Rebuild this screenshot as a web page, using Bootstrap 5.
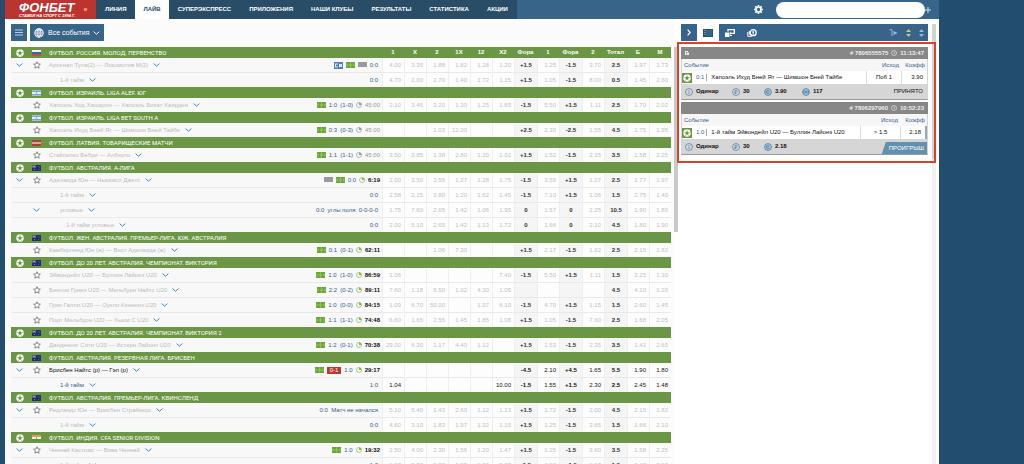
<!DOCTYPE html>
<html lang="ru">
<head>
<meta charset="utf-8">
<meta name="viewport" content="width=device-width, initial-scale=1">
<title>Фонбет — Лайв</title>
<link href="https://cdn.jsdelivr.net/npm/bootstrap@5.3.0/dist/css/bootstrap.min.css" rel="stylesheet">
<style>
  body { font-family: "Liberation Sans", Arial, sans-serif; font-size: 6px; line-height: 14px; color: #111; background: #224d6e; padding: 0 85px 0 5px; }
  a { text-decoration: none; }
  button { background: none; border: 0; padding: 0; color: inherit; line-height: 1; }
  svg { display: block; flex: none; }
  .shell { background: #fff; }

  /* top bar */
  .topbar { height: 19px; background: #386489; color: #fff; }
  .brand { width: 91px; background: #bb3430; padding-left: 14px; color: #fff; }
  .brand-name { font-size: 13px; line-height: 13px; font-weight: 700; font-style: italic; }
  .brand-tag { font-size: 4px; line-height: 4px; font-style: italic; font-weight: 700; }
  .mainmenu { background: #294d66; }
  .mainmenu a { color: #fff; font-size: 6px; font-weight: 700; line-height: 19px; padding: 0 9px; }
  .mainmenu a.active { background: #fff; color: #294d66; padding: 0 8px; }
  .account { width: 149px; height: 16px; border-radius: 8px; background: #fff; margin-left: 13px; }
  .gear { color: #fff; }

  /* line */
  .lines { background: #fbfbfb; padding: 5px 3px 0 6px; }
  .toolrow { gap: 3px; margin-bottom: 6px; }
  .tool { height: 17px; background: #386489; color: #fff; border-radius: 0; }
  .tool-menu { width: 16px; }
  .tool-filter { font-size: 7px; padding: 0 4px; gap: 4px; }
  .scroll-track { width: 4px; }
  .scroll-thumb { width: 4px; height: 185px; background: #c8c8c8; }

  .odds { table-layout: fixed; width: 100%; border-collapse: separate; border-spacing: 0; }
  .odds th, .odds td { padding: 0; white-space: nowrap; overflow: hidden; }
  .c-odd { width: 22px; }
  .c-key { width: 23px; }
  .league th { height: 11px; line-height: 11px; background: #6b9645; color: #fff; font-weight: 700; text-align: center; }
  .league .league-cell { font-family: Roboto, "Liberation Sans", sans-serif; font-weight: 400; text-align: left; }
  .slot { flex: none; width: 17px; display: flex; justify-content: center; }
  .game td { height: 14px; line-height: 14px; background: #fdfdfd; color: #c0c0c0; border-left: 1px solid #efefef; text-align: right; padding-right: 3px; }
  .game td:first-child { background: #f8f8f8; border-left: 0; padding: 0; }
  .game td.key { background: #f5f5f5; color: #333; text-align: center; padding: 0; font-weight: 700; }
  .game + .game td { border-top: 1px solid #e9e9e9; }
  .game.open td { color: #111; }
  .game .title { color: #bcbcbc; }
  .game.open .title { color: #111; }
  .game.open .title.sub { color: #35608a; }
  .title { margin-left: 4px; gap: 5px; }
  .title.sub { margin-left: 15px; }
  .title.deep { margin-left: 21px; }
  .status { color: #35608a; gap: 3px; padding-right: 4px; }
  .status.timed { padding-right: 2px; }
  .clock { color: #84b552; gap: 3px; }
  .clock.pause { color: #999; }
  .clock-text { color: #111; font-weight: 700; }
  .pause .clock-text { color: #999; font-weight: 400; }
  .redcard { background: #b93a35; color: #fff; line-height: 7px; padding: 0 3px; }
  .odds .chev { color: #3f86b8; }
  .star { color: #777; }

  /* coupons */
  .side { width: 261px; padding: 5px 3px 0 3px; }
  .tabs { height: 17px; background: #386489; color: #fff; }
  .tabs button { width: 22px; height: 17px; display: flex; align-items: center; justify-content: center; }
  .tabs button:first-child { width: 16px; }
  .tabs button.active { background: #fff; color: #294d66; }
  .marker { position: absolute; inset: 18px -8px auto -4px; height: 121px; border: 2px solid #d9412c; pointer-events: none; }
  .coupons { padding-top: 6px; gap: 2px; }
  .coupon { border: 1px solid #d4d4d4; border-bottom-color: #999; background: #f6f6f6; }
  .coupon-head { height: 12px; margin: -1px -1px 0; background: #878787; color: #eee; line-height: 12px; padding: 0 4px; gap: 3px; font-weight: 700; }
  .bet { width: 100%; table-layout: fixed; border-collapse: separate; border-spacing: 0; }
  .bet th { height: 12px; padding: 0 2px; line-height: 12px; font-weight: 400; color: #35608a; text-align: right; }
  .bet td { height: 13px; padding: 0; line-height: 13px; background: #fff; text-align: center; border-left: 1px solid #ddd; white-space: nowrap; }
  .bet th:first-child { text-align: left; }
  .bet td:first-child { border-left: 0; }
  .bet td:last-child { text-align: right; padding-right: 4px; }
  .bet td.scrolled { border-right: 2px solid #8fa9bd; }
  .bet-score { color: #35608a; border-right: 1px solid #aaa; line-height: 7px; padding-right: 2px; }
  .coupon-foot { height: 15px; background: #d6d6d6; line-height: 15px; font-weight: 700; }
  .fact { gap: 3px; }
  .fact-a { width: 50px; padding-left: 3px; }
  .fact-b { width: 32px; }
  .fact-c { width: 38px; }
  .lost { align-self: flex-end; background: #6490b0; color: #fff; font-weight: 400; line-height: 12px; padding: 0 3px 0 7px; clip-path: polygon(4px 0, 100% 0, 100% 100%, 0 100%); }
  .side-scroll { width: 4px; background: #f0f0f0; }
  .side-thumb { width: 4px; height: 135px; background: #d3d3d3; }
</style>
<script src="https://cdn.jsdelivr.net/npm/bootstrap@5.3.0/dist/js/bootstrap.bundle.min.js"></script>
</head>
<body class="vh-100 overflow-hidden">

<svg width="0" height="0" class="position-absolute" aria-hidden="true">
  <symbol id="i-chev" viewBox="0 0 7 4"><path d="M.6.6 3.500 3.200 6.400.6" fill="none" stroke="currentColor" stroke-width="1"/></symbol>
  <symbol id="i-star" viewBox="0 0 16 16"><path d="M8 1.500l2 4.400 4.800.5-3.600 3.200 1 4.800L8 12l-4.200 2.400 1-4.800L1.200 6.400 6 5.900z" fill="none" stroke="currentColor" stroke-width="1.700"/></symbol>
  <symbol id="i-ball" viewBox="0 0 16 16"><circle cx="8" cy="8" r="7.500" fill="#fff"/><path d="M8 5l3 2.200-1.200 3.500H6.200L5 7.200zM8 0v3M1 6l2 1M15 6l-2 1M4 14l1-2M12 14l-1-2" fill="#6b9645" stroke="#6b9645" stroke-width="1"/><path d="M8 3v2M3 7l2 .2M13 7l-2 .2M5 12l1.200-1.300M11 12l-1.200-1.300" stroke="#6b9645" stroke-width="1"/></symbol>
  <symbol id="i-pitch" viewBox="0 0 9 6"><path fill="#6aa536" d="M0 0h9v6H0z"/><path d="M4.500 0v6M0 2h1.500v2H0M9 2H7.500v2H9" fill="none" stroke="#a9d27c" stroke-width=".5"/><circle cx="4.500" cy="3" r="1.100" fill="none" stroke="#a9d27c" stroke-width=".5"/></symbol>
  <symbol id="i-tv" viewBox="0 0 9 6"><path fill="#9a9a9a" d="M0 0h9v5H0z"/></symbol>
  <symbol id="i-stream" viewBox="0 0 9 7"><path fill="#4f80b3" d="M0 0h9v7H0z"/><path fill="#dce8f4" d="M1 1.500h3v1H2v2h2v1H1zM5 2h3v3H5z"/></symbol>
  <symbol id="i-clock" viewBox="0 0 12 12"><circle cx="6" cy="6" r="5" fill="none" stroke="currentColor" stroke-width="1.300"/><path d="M6 6V1a5 5 0 0 1 5 5z" fill="currentColor"/></symbol>
  <symbol id="i-time" viewBox="0 0 12 12"><circle cx="6" cy="6" r="5" fill="none" stroke="currentColor" stroke-width="1.200"/><path d="M6 3v3.500h2" fill="none" stroke="currentColor" stroke-width="1.200"/></symbol>
  <symbol id="f-ru" viewBox="0 0 9 6"><path fill="#f3f3f3" d="M0 0h9v2H0z"/><path fill="#3b62ad" d="M0 2h9v2H0z"/><path fill="#c84a4a" d="M0 4h9v2H0z"/></symbol>
  <symbol id="f-il" viewBox="0 0 9 6"><path fill="#e8eef6" d="M0 0h9v6H0z"/><path fill="#5b8dcb" d="M0 .6h9v1.200H0zM0 4.200h9v1.200H0zM4.500 2l1 1.500h-2z"/></symbol>
  <symbol id="f-lv" viewBox="0 0 9 6"><path fill="#a5433c" d="M0 0h9v6H0z"/><path fill="#f3e6e2" d="M0 2.400h9v1.200H0z"/></symbol>
  <symbol id="f-au" viewBox="0 0 9 6"><path fill="#20306f" d="M0 0h9v6H0z"/><path stroke="#d8b9c8" stroke-width=".4" d="M0 0l4 3M4 0L0 3M2 0v3M0 1.500h4"/><path fill="#aab3dc" d="M6.500 1h.6v.6h-.6zM7.500 2.500h.6v.6h-.6zM6.500 4.500h.6v.6h-.6zM2 4.300h.8v.8H2z"/></symbol>
  <symbol id="f-in" viewBox="0 0 9 6"><path fill="#e79a4c" d="M0 0h9v2H0z"/><path fill="#f5f3ec" d="M0 2h9v2H0z"/><path fill="#59924a" d="M0 4h9v2H0z"/><circle cx="4.500" cy="3" r=".7" fill="#667"/></symbol>
</svg>

<div class="shell d-flex flex-column h-100">
  <header class="topbar d-flex flex-shrink-0 align-items-center">
    <a href="#" class="brand h-100 d-flex align-items-center">
      <span class="flex-shrink-0">
        <span class="brand-name d-block">ФОНБЕТ</span>
        <span class="brand-tag d-block text-nowrap">СТАВКИ НА СПОРТ С 1994 Г.</span>
      </span>
      <svg class="ms-2" width="5" height="5" viewBox="0 0 4 4"><circle cx="2" cy="2" r="1.400" fill="#f09a62"/></svg>
    </a>
    <nav class="mainmenu d-flex text-nowrap">
      <a href="#">ЛИНИЯ</a><a href="#" class="active">ЛАЙВ</a><a href="#">СУПЕРЭКСПРЕСС</a><a href="#">ПРИЛОЖЕНИЯ</a><a href="#">НАШИ КЛУБЫ</a><a href="#">РЕЗУЛЬТАТЫ</a><a href="#">СТАТИСТИКА</a><a href="#">АКЦИИ</a>
    </nav>
    <button class="gear ms-auto" aria-label="Настройки"><svg width="9" height="9" viewBox="0 0 16 16"><circle cx="8" cy="8" r="4.400" fill="none" stroke="currentColor" stroke-width="3"/><path d="M8 0v3M8 13v3M0 8h3M13 8h3M2.300 2.300l2 2M11.700 11.700l2 2M2.300 13.700l2-2M11.700 4.300l2-2" stroke="currentColor" stroke-width="2.800"/></svg></button>
    <div class="account"></div>
    <button class="me-2" aria-label="Пополнить"><svg width="6" height="6" viewBox="0 0 6 6"><path d="M3 0v6M0 3h6" stroke="#d5e2ec" stroke-width="1"/></svg></button>
  </header>

  <div class="d-flex flex-grow-1 overflow-hidden">
    <main class="lines d-flex flex-column flex-grow-1 overflow-hidden">
      <div class="toolrow d-flex flex-shrink-0">
        <button class="tool tool-menu d-flex align-items-center justify-content-center" aria-label="Меню"><svg width="8" height="7" viewBox="0 0 8 7"><path d="M0 1h8M0 3.500h8M0 6h8" stroke="#c9dbe8" stroke-width=".9"/></svg></button>
        <button class="tool tool-filter d-flex align-items-center"><svg width="10" height="10" viewBox="0 0 12 12"><circle cx="6" cy="6" r="5" fill="none" stroke="#fff" stroke-width="1.300"/><ellipse cx="6" cy="6" rx="2.300" ry="5" fill="none" stroke="#fff"/><path d="M1 6h10M2 3.300h8M2 8.700h8M6 1v10" stroke="#fff" stroke-width=".9"/></svg>Все события<svg width="7" height="4"><use href="#i-chev"/></svg></button>
      </div>
      <div class="overflow-hidden">
        <table class="odds">
          <colgroup><col><col class="c-odd" span="6"><col class="c-key"><col class="c-odd"><col class="c-key"><col class="c-odd"><col class="c-key"><col class="c-odd" span="2"></colgroup>
          <tbody id="rows"></tbody>
        </table>
      </div>
    </main>
    <div class="scroll-track flex-shrink-0 pt-4"><div class="scroll-thumb mt-1"></div></div>

    <aside class="side flex-shrink-0 d-flex gap-1">
      <div class="flex-grow-1 position-relative">
        <div class="tabs d-flex align-items-center">
          <button aria-label="Свернуть"><svg width="4" height="7" viewBox="0 0 4 7"><path d="M.6.6 3.200 3.500.6 6.400" fill="none" stroke="currentColor" stroke-width="1.200"/></svg></button>
          <button class="active" aria-label="Купоны"><svg width="10" height="8" viewBox="0 0 10 8"><path fill="#294d66" d="M0 0h10v8H0z"/><path fill="#386489" d="M3 .8h6.300v6.400H3z"/><path stroke="#fff" stroke-width=".7" stroke-dasharray="1 1" d="M2 1v6"/></svg></button>
          <button aria-label="Экспресс"><svg width="10" height="8" viewBox="0 0 10 8"><path fill="#fff" d="M0 3.500h4.500V8H0z"/><path d="M3 2.500V.7h6.300v3.600H6" fill="none" stroke="#fff" stroke-width="1.300"/><path fill="#fff" d="M6 2.500v3.600L4.600 4.300zM5 6h2v1H5z"/></svg></button>
          <button aria-label="Выкуп"><svg width="10" height="8" viewBox="0 0 10 8"><circle cx="6.200" cy="3.700" r="3" fill="none" stroke="#fff" stroke-width="1.300"/><path d="M6.200 1.700v4M5.400 3h1.600M.8 3v4.300h4M2.300 2v3.600" fill="none" stroke="#fff" stroke-width="1"/></svg></button>
          <span class="ms-auto d-flex align-items-center gap-2 pe-1">
            <svg width="9" height="7" viewBox="0 0 9 7"><path d="M.5.7H3V7" fill="none" stroke="#9db9cf"/><path fill="#9db9cf" d="M4.500 2 8.500 4l-4 2z"/></svg>
            <svg width="5" height="8" viewBox="0 0 5 8"><path fill="#d8c376" d="M0 3 2.500 0 5 3zM0 5h5L2.500 8z"/></svg>
            <svg width="5" height="8" viewBox="0 0 5 8"><path fill="#9db9cf" d="M0 3 2.500 0 5 3zM0 5h5L2.500 8z"/></svg>
          </span>
        </div>

        <div class="coupons d-flex flex-column">
          <section class="coupon">
            <div class="coupon-head d-flex align-items-center">
              <svg class="me-auto" width="4" height="4" viewBox="0 0 4 4"><path d="M0 0h3v1H1v3H0zM1.500 1.500H4V4H1.500z" fill="#eee"/></svg>
              <span># 7806555575</span><svg width="6" height="6"><use href="#i-time"/></svg><span>11:13:47</span>
            </div>
            <table class="bet">
              <colgroup><col><col width="35"><col width="26"></colgroup>
              <thead><tr><th>Событие</th><th>Исход</th><th>Коэфф</th></tr></thead>
              <tbody><tr><td><div class="d-flex align-items-center gap-1"><svg width="10" height="10" viewBox="0 0 20 20"><path fill="#6b9645" d="M0 0h20v20H0z"/><use href="#i-ball" x="2" y="2" width="16" height="16"/></svg><span class="bet-score">0:1</span><span>Хапоэль Ихуд Бней Ят — Шимшон Бней Тайбе</span></div></td><td>Поб 1</td><td>3.90</td></tr></tbody>
            </table>
            <div class="coupon-foot d-flex align-items-center">
              <span class="fact fact-a d-flex align-items-center"><svg width="8" height="8" viewBox="0 0 16 16"><circle cx="8" cy="8" r="7" fill="none" stroke="#4b7ea5" stroke-width="1.400"/><path d="M8 7v5M8 4v1.500" stroke="#4b7ea5" stroke-width="1.500"/></svg>Одинар</span>
              <span class="fact fact-b d-flex align-items-center"><svg width="8" height="8" viewBox="0 0 16 16"><circle cx="8" cy="8" r="7" fill="none" stroke="#4b7ea5" stroke-width="1.400"/><path d="M6.500 12V4.500h2a2 2 0 0 1 0 4H5M5 10.500h4" fill="none" stroke="#4b7ea5" stroke-width="1.300"/></svg>30</span>
              <span class="fact fact-c d-flex align-items-center"><svg width="8" height="8" viewBox="0 0 16 16"><circle cx="8" cy="8" r="7" fill="#9fc0d8" stroke="#4b7ea5" stroke-width="1.400"/><path d="M10.500 5.500a3.500 3.500 0 1 0 0 5M4 8h6" fill="none" stroke="#4b7ea5" stroke-width="1.300"/></svg>3.90</span>
              <span class="fact d-flex align-items-center"><svg width="8" height="8" viewBox="0 0 16 16"><circle cx="8" cy="8" r="7" fill="#9fc0d8" stroke="#4b7ea5" stroke-width="1.400"/><path d="M3 6h4v4H3zM9 6h4v4H9z" fill="none" stroke="#4b7ea5" stroke-width="1.300"/></svg>117</span>
              <span class="ms-auto pe-1 fw-normal">ПРИНЯТО</span>
            </div>
          </section>

          <section class="coupon">
            <div class="coupon-head d-flex align-items-center">
              <span class="ms-auto"># 7806297960</span><svg width="6" height="6"><use href="#i-time"/></svg><span>10:52:23</span>
            </div>
            <table class="bet">
              <colgroup><col><col width="40"><col width="27"></colgroup>
              <thead><tr><th>Событие</th><th>Исход</th><th>Коэфф</th></tr></thead>
              <tbody><tr><td><div class="d-flex align-items-center gap-1"><svg width="10" height="10" viewBox="0 0 20 20"><path fill="#6b9645" d="M0 0h20v20H0z"/><use href="#i-ball" x="2" y="2" width="16" height="16"/></svg><span class="bet-score">1:0</span><span>1-й тайм Эйвондейл U20 — Буллин Лайонз U20</span></div></td><td>&gt; 1.5</td><td class="scrolled">2.18</td></tr></tbody>
            </table>
            <div class="coupon-foot d-flex align-items-center">
              <span class="fact fact-a d-flex align-items-center"><svg width="8" height="8" viewBox="0 0 16 16"><circle cx="8" cy="8" r="7" fill="none" stroke="#4b7ea5" stroke-width="1.400"/><path d="M8 7v5M8 4v1.500" stroke="#4b7ea5" stroke-width="1.500"/></svg>Одинар</span>
              <span class="fact fact-b d-flex align-items-center"><svg width="8" height="8" viewBox="0 0 16 16"><circle cx="8" cy="8" r="7" fill="none" stroke="#4b7ea5" stroke-width="1.400"/><path d="M6.500 12V4.500h2a2 2 0 0 1 0 4H5M5 10.500h4" fill="none" stroke="#4b7ea5" stroke-width="1.300"/></svg>30</span>
              <span class="fact fact-c d-flex align-items-center"><svg width="8" height="8" viewBox="0 0 16 16"><circle cx="8" cy="8" r="7" fill="#9fc0d8" stroke="#4b7ea5" stroke-width="1.400"/><path d="M10.500 5.500a3.500 3.500 0 1 0 0 5M4 8h6" fill="none" stroke="#4b7ea5" stroke-width="1.300"/></svg>2.18</span>
              <span class="lost ms-auto">ПРОИГРЫШ</span>
            </div>
          </section>
        </div>
        <div class="marker"></div>
      </div>
      <div class="side-scroll"><div class="side-thumb"></div></div>
    </aside>
  </div>
</div>

<script>
  // Each game: kind | name | icons | score | time or note | 13 odds separated by spaces ("." = empty)
  // kind: m main, M main with expander, s sub-bet, S sub-bet with expander, d nested sub-bet; "!" marks open odds
  const leagues = [
    ['ru', 'ФУТБОЛ. РОССИЯ. МОЛОД. ПЕРВЕНСТВО',
      'M|Арсенал Тула(2) — Локомотив М(2)|stream pitch tv|0:0||4.00 3.35 1.88 1.82 1.28 1.20 +1.5 1.25 -1.5 3.70 2.5 1.97 1.73',
      's|1-й тайм||0:0||4.70 2.00 2.70 1.40 1.72 1.15 +1.5 1.05 -1.5 8.00 0.5 1.45 2.60'],
    ['il', 'ФУТБОЛ. ИЗРАИЛЬ. LIGA ALEF. ЮГ',
      'm|Хапоэль Ход Хашарон — Хапоэль Бикат Хаярден|pitch|1:0 (1-0)|45:00|2.10 3.45 3.20 1.30 1.25 1.65 -1.5 5.50 +1.5 1.11 2.5 1.70 2.02'],
    ['il', 'ФУТБОЛ. ИЗРАИЛЬ. LIGA BET SOUTH A',
      'm|Хапоэль Ихуд Бней Ят — Шимшон Бней Тайбе|pitch|0:3 (0-3)|45:00|. . 1.03 12.00 . . +2.5 2.30 -2.5 1.55 4.5 1.75 1.95'],
    ['lv', 'ФУТБОЛ. ЛАТВИЯ. ТОВАРИЩЕСКИЕ МАТЧИ',
      'm|Стайселес Бебри — Алберто|pitch|1:1 (1-1)|45:00|3.50 3.85 1.38 2.80 1.20 1.02 +1.5 1.52 -1.5 2.35 3.5 1.58 2.25'],
    ['au', 'ФУТБОЛ. АВСТРАЛИЯ. А-ЛИГА',
      'M|Аделаида Юн — Ньюкасл Джетс|tv pitch|0:0|6:19|2.00 3.50 3.55 1.27 1.28 1.75 -1.5 3.55 +1.5 1.27 2.5 1.77 1.97',
      's|1-й тайм||0:0||2.58 2.15 3.80 1.20 1.62 1.45 -1.5 7.10 +1.5 1.06 1.5 2.75 1.40',
      'S|угловые||0:0 углы поля: 0-0-0-0||1.75 7.60 2.65 1.42 1.06 1.95 0 1.57 0 2.25 10.5 1.90 1.80',
      'd|1-й тайм угловые||0:0||2.00 5.10 2.65 1.42 1.13 1.72 0 1.66 0 2.10 4.5 1.80 1.90'],
    ['au', 'ФУТБОЛ. ЖЕН. АВСТРАЛИЯ. ПРЕМЬЕР-ЛИГА. ЮЖ. АВСТРАЛИЯ',
      'm|Камберленд Юн (ж) — Вест Аделаида (ж)|pitch|0:1 (0-1)|62:11|. . 1.06 7.30 . . +1.5 2.17 -1.5 1.62 2.5 2.15 1.62'],
    ['au', 'ФУТБОЛ. ДО 20 ЛЕТ. АВСТРАЛИЯ. ЧЕМПИОНАТ. ВИКТОРИЯ',
      'm|Эйвондейл U20 — Буллин Лайонз U20|pitch|1:0 (1-0)|86:59|1.06 . . . . 7.40 -1.5 5.50 +1.5 1.11 1.5 3.25 1.30',
      'm|Бентли Гринз U20 — Мельбурн Найтс U20|pitch|2:2 (0-2)|89:11|7.60 1.18 9.50 1.02 4.30 1.05 . . . . 4.5 4.10 1.20',
      'm|Грин Галли U20 — Оукли Кэннонз U20|pitch|1:0 (0-0)|84:15|1.09 6.70 50.00 . 1.07 6.10 -1.5 4.70 +1.5 1.15 1.5 2.60 1.45',
      'm|Порт Мельбурн U20 — Хьюм С U20|pitch|1:1 (1-1)|74:48|6.60 1.65 2.55 1.45 1.85 1.08 +1.5 1.05 -1.5 7.60 2.5 1.68 2.05'],
    ['au', 'ФУТБОЛ. ДО 20 ЛЕТ. АВСТРАЛИЯ. ЧЕМПИОНАТ. ВИКТОРИЯ 2',
      'm|Данденонг Сити U20 — Истерн Лайонз U20|pitch|1:2 (0-1)|70:38|29.00 6.30 1.17 4.40 1.12 . +1.5 1.53 -1.5 2.35 3.5 1.42 2.65'],
    ['au', 'ФУТБОЛ. АВСТРАЛИЯ. РЕЗЕРВНАЯ ЛИГА. БРИСБЕН',
      'M!|Брисбен Найтс (р) — Гэп (р)|pitch red|1:0|29:17|. . . . . . -4.5 2.10 +4.5 1.65 5.5 1.90 1.80',
      's!|1-й тайм||1:0||1.04 . . . . 10.00 -1.5 1.55 +1.5 2.30 2.5 2.45 1.48'],
    ['au', 'ФУТБОЛ. АВСТРАЛИЯ. ПРЕМЬЕР-ЛИГА. КВИНСЛЕНД',
      'M|Редландс Юн — Брисбен Страйкерс||0:0 Матч не начался||5.10 5.40 1.43 2.60 1.12 1.13 +1.5 1.72 -1.5 2.00 4.5 2.15 1.62',
      's|1-й тайм||0:0||4.60 3.10 1.83 1.97 1.32 1.15 +1.5 1.25 -1.5 3.65 1.5 1.66 2.10'],
    ['in', 'ФУТБОЛ. ИНДИЯ. CFA SENIOR DIVISION',
      'M|Ченнай Кастомс — Вива Ченнай|pitch|1:0|19:32|2.50 4.00 2.30 1.56 1.20 1.47 +1.5 1.25 -1.5 3.60 3.5 1.58 2.25',
      's|1-й тайм||1:0||1.67 3.30 6.20 1.09 1.30 2.05 -1.5 4.60 +1.5 1.17 1.5 1.43 2.60']
  ];
  const heads = ['1', 'X', '2', '1X', '12', 'X2', 'Фора', '1', 'Фора', '2', 'Тотал', 'Б', 'М'];
  const keys = [6, 8, 10];
  const use = (id, w, h, cls = '') => `<svg class="${cls}" width="${w}" height="${h}"><use href="#${id}"/></svg>`;
  const chev = label => `<button aria-label="${label}">${use('i-chev', 7, 4, 'chev')}</button>`;
  const icon = n => n === 'red' ? '<span class="redcard">0-1</span>' : use('i-' + n, 9, n === 'stream' ? 7 : 6);

  function league([flag, title], first) {
    return `<tr class="league"><th class="league-cell" ${first ? '' : 'colspan="14"'}><div class="d-flex align-items-center">
      <span class="slot">${use('i-ball', 8, 8)}</span><span class="slot">${use('f-' + flag, 9, 6)}</span><span class="ms-1">${title}</span></div></th>
      ${first ? heads.map(h => `<th>${h}</th>`).join('') : ''}</tr>`;
  }
  function game(line) {
    const [kind, name, icons, score, time, odds] = line.split('|');
    const k = kind[0], open = kind.includes('!'), main = k === 'm' || k === 'M';
    const slot1 = k === 'M' ? chev('Развернуть') : '';
    const slot2 = main ? `<button aria-label="В избранное">${use('i-star', 8, 8, 'star')}</button>` : k === 'S' ? chev('Развернуть') : '';
    const cls = main ? '' : k === 'd' ? 'deep' : 'sub';
    const clock = time ? `<span class="clock d-flex align-items-center ${time === '45:00' ? 'pause' : ''}">${use('i-clock', 6, 6)}<span class="clock-text">${time}</span></span>` : '';
    return `<tr class="game ${open ? 'open' : ''}"><td><div class="d-flex align-items-center">
      <span class="slot">${slot1}</span><span class="slot">${slot2}</span>
      <span class="title ${cls} d-flex align-items-center"><span>${name}</span>${chev('Подробнее')}</span>
      <span class="status ${time ? 'timed' : ''} ms-auto d-flex align-items-center">${icons ? icons.split(' ').map(icon).join('') : ''}<span>${score.replace(' ', '&nbsp; ')}</span>${clock}</span></div></td>
      ${odds.split(' ').map((o, i) => `<td class="${keys.includes(i) ? 'key' : ''}">${o === '.' ? '' : o}</td>`).join('')}</tr>`;
  }
  document.getElementById('rows').innerHTML =
    leagues.map(([flag, title, ...games], i) => league([flag, title], i === 0) + games.map(game).join('')).join('');
</script>
</body>
</html>
